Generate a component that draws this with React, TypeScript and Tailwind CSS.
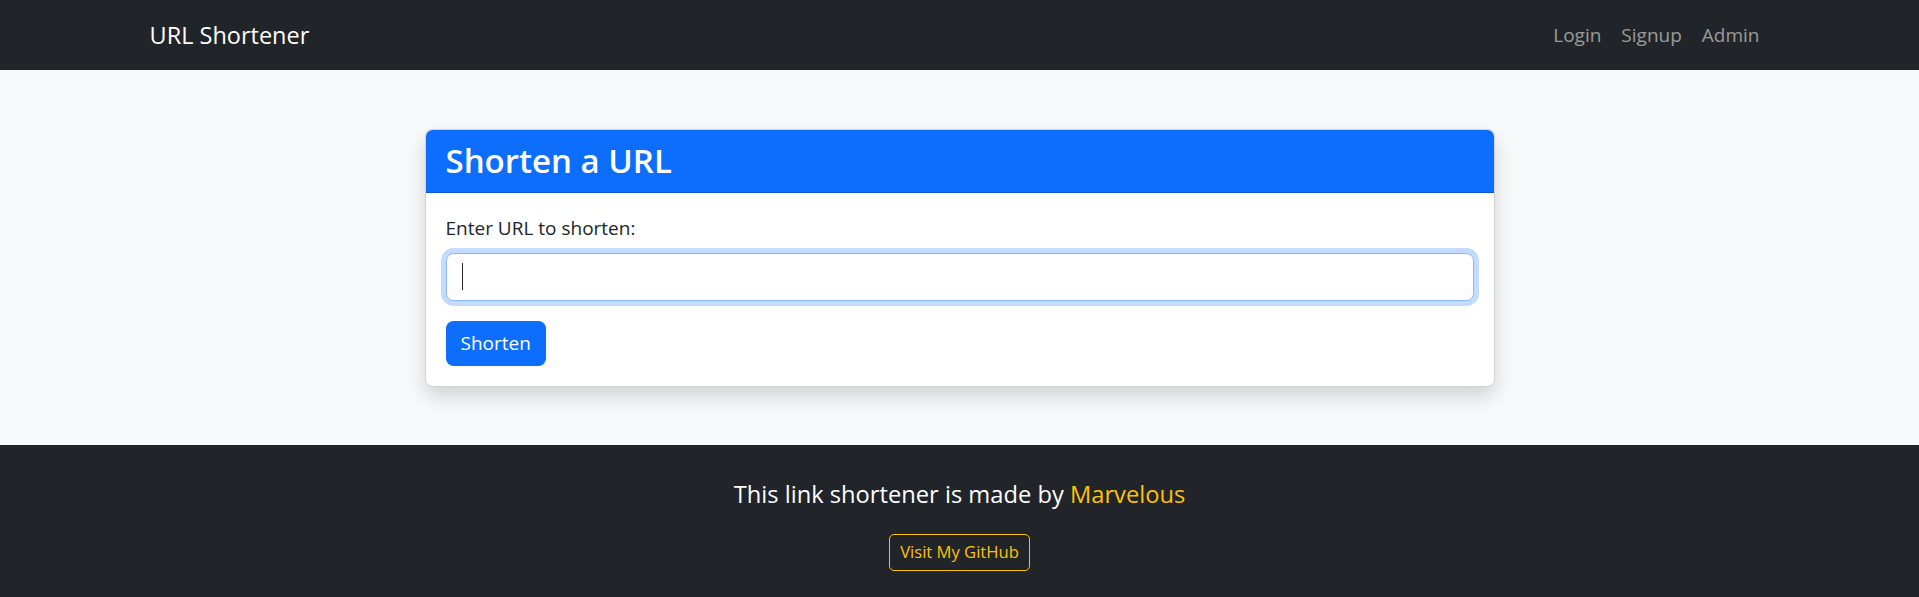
import React from "react";

const navLinks = ["Login", "Signup", "Admin"];

export default function App() {
  return (
    <div className="font-['Open_Sans','Noto_Sans',sans-serif] text-[#212529]">
      <nav className="bg-[#212529] h-[70px] flex items-center">
        <div className="w-[1650px] mx-auto px-[15px] flex items-center justify-between">
          <a className="text-white text-[23.5px] leading-[38px]">URL Shortener</a>
          <ul className="flex items-center">
            {navLinks.map((l) => (
              <li key={l}>
                <a className="block px-[10px] py-[10px] text-[19px] leading-[30px] text-[rgba(255,255,255,0.55)]">
                  {l}
                </a>
              </li>
            ))}
          </ul>
        </div>
      </nav>

      <main className="bg-[#f8f9fa] pt-[59px] pb-[58px]">
        <div className="w-[1070px] mx-auto bg-white border border-[rgba(0,0,0,0.175)] rounded-[7.5px] shadow-[0_10px_20px_rgba(0,0,0,0.15)] overflow-hidden">
          <div className="bg-[#0d6efd] text-white px-[20px] py-[10px] border-b border-[rgba(0,0,0,0.175)]">
            <h3 className="text-[33px] leading-[42px] font-semibold">Shorten a URL</h3>
          </div>
          <div className="p-[20px]">
            <label className="block text-[19px] leading-[30px] mb-[10px]">Enter URL to shorten:</label>
            <div className="relative mb-[20px]">
              <input
                type="text"
                className="w-full h-[47.5px] px-[15px] text-[19px] bg-white border border-[#86b7fe] rounded-[7.5px] outline-none shadow-[0_0_0_5px_rgba(13,110,253,0.25)] caret-transparent"
              />
              <span className="absolute left-[16px] top-[10px] w-px h-[27px] bg-[#212529]" />
            </div>
            <button className="h-[45px] px-[15px] bg-[#0d6efd] text-white text-[19px] rounded-[7.5px]">
              Shorten
            </button>
          </div>
        </div>
      </main>

      <footer className="bg-[#212529] text-white text-center py-[30px]">
        <p className="text-[23.7px] leading-[38px] mb-[21px]">
          This link shortener is made by <span className="text-[#ffc107]">Marvelous</span>
        </p>
        <a className="inline-flex items-center h-[37.5px] px-[10px] border border-[#ffc107] text-[#ffc107] text-[16.6px] rounded-[5px]">
          Visit My GitHub
        </a>
      </footer>
    </div>
  );
}
